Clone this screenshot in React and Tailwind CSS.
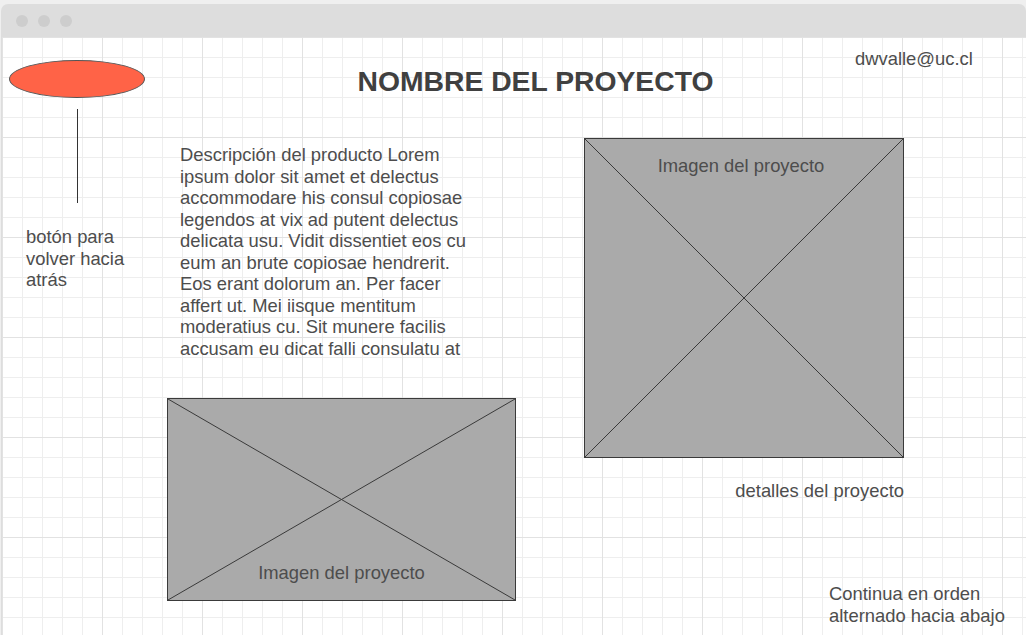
import React from "react";

const descripcion = [
  "Descripción del producto Lorem",
  "ipsum dolor sit amet et delectus",
  "accommodare his consul copiosae",
  "legendos at vix ad putent delectus",
  "delicata usu. Vidit dissentiet eos cu",
  "eum an brute copiosae hendrerit.",
  "Eos erant dolorum an. Per facer",
  "affert ut. Mei iisque mentitum",
  "moderatius cu. Sit munere facilis",
  "accusam eu dicat falli consulatu at",
];

// caja gris con la X de "imagen"
function Placeholder({ className, label, labelClass }) {
  return (
    <div className={`relative shrink-0 bg-[#aaaaaa] border border-[#3a3a3a] ${className}`}>
      <svg
        className="absolute inset-0 w-full h-full"
        viewBox="0 0 100 100"
        preserveAspectRatio="none"
      >
        <line x1="0" y1="0" x2="100" y2="100" stroke="#3a3a3a" strokeWidth="1" vectorEffect="non-scaling-stroke" />
        <line x1="100" y1="0" x2="0" y2="100" stroke="#3a3a3a" strokeWidth="1" vectorEffect="non-scaling-stroke" />
      </svg>
      <div className={`absolute left-0 right-0 text-center text-[#4d4d4d] text-[18.4px] leading-[20px] ${labelClass}`}>
        {label}
      </div>
    </div>
  );
}

export default function App() {
  return (
    <div className="w-[1026px] h-[635px] overflow-hidden bg-[#efefef] pt-[4px] pl-[1px] font-['Liberation_Sans',Arial,sans-serif]">
      <div className="flex flex-col h-full rounded-t-[7px] bg-[#dddddd] pl-[1px]">
        {/* barra de la ventana */}
        <div className="h-[33px] shrink-0 flex items-center gap-[10px] pl-[14px]">
          <span className="w-[12px] h-[12px] rounded-full bg-[#cdcdcd]" />
          <span className="w-[12px] h-[12px] rounded-full bg-[#cdcdcd]" />
          <span className="w-[12px] h-[12px] rounded-full bg-[#cdcdcd]" />
        </div>

        {/* lienzo del wireframe */}
        <div className="relative flex-1 bg-white bg-[linear-gradient(to_right,#e2e2e2_1px,transparent_1px),linear-gradient(to_bottom,#e2e2e2_1px,transparent_1px),linear-gradient(to_right,#eeeeee_1px,transparent_1px),linear-gradient(to_bottom,#eeeeee_1px,transparent_1px)] bg-size-[100px_100px,100px_100px,20px_20px,20px_20px] text-[#4d4d4d] text-[18.4px] leading-[21.5px]">
          {/* boton volver */}
          <div className="absolute left-[7px] top-[23px] flex flex-col">
            <div className="w-[136px] h-[38px] rounded-[50%] bg-[#ff6347] border border-[#555555]" />
            <div className="ml-[68px] mt-[11px] w-px h-[94px] bg-[#333333]" />
            <div className="ml-[17px] mt-[23px]">
              botón para
              <br />
              volver hacia
              <br />
              atrás
            </div>
          </div>

          <h1 className="absolute left-0 right-0 top-[28px] text-center font-bold text-[28.3px] leading-[32px] text-[#404040] pl-[43px]">
            NOMBRE DEL PROYECTO
          </h1>

          <div className="absolute left-[853px] top-[11px]">dwvalle@uc.cl</div>

          <div className="absolute left-[165px] top-[107px] flex flex-col">
            <div className="ml-[13px]">
              {descripcion.map((l) => (
                <div key={l} className="whitespace-nowrap">{l}</div>
              ))}
            </div>
            <Placeholder
              className="mt-[39px] w-[349px] h-[203px]"
              label="Imagen del proyecto"
              labelClass="top-[164px]"
            />
          </div>

          <div className="absolute left-[582px] top-[101px] w-[320px] flex flex-col items-end">
            <Placeholder
              className="w-[320px] h-[320px]"
              label="Imagen del proyecto"
              labelClass="top-[17px] pr-[6px]"
            />
            <div className="mt-[22px] whitespace-nowrap">detalles del proyecto</div>
          </div>

          <div className="absolute left-[827px] top-[546px]">
            Continua en orden
            <br />
            alternado hacia abajo
          </div>
        </div>
      </div>
    </div>
  );
}
